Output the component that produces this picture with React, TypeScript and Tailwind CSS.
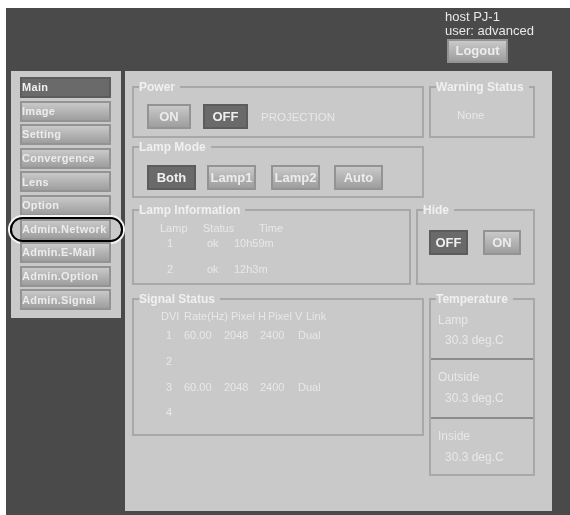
import React from "react";

const menuItems = ["Main", "Image", "Setting", "Convergence", "Lens", "Option", "Admin.Network", "Admin.E-Mail", "Admin.Option", "Admin.Signal"];

const signalRows = [
    { dvi: "1", rate: "60.00", h: "2048", v: "2400", link: "Dual", rowClass: "h-[26px]" },
    { dvi: "2", rate: "", h: "", v: "", link: "", rowClass: "h-[26px]" },
    { dvi: "3", rate: "60.00", h: "2048", v: "2400", link: "Dual", rowClass: "h-[25px]" },
    { dvi: "4", rate: "", h: "", v: "", link: "", rowClass: "h-[23px]" },
];

const temps = [
    { label: "Lamp", cellClass: "h-[54px] pt-[5px] border-b-2 border-[#8c8c8c]", valueClass: "mt-[2px]" },
    { label: "Outside", cellClass: "h-[59px] pt-[8px] border-b-2 border-[#8c8c8c]", valueClass: "mt-[3px]" },
    { label: "Inside", cellClass: "h-[57px] pt-[8px]", valueClass: "mt-[3px]" },
];

function Button({ label, active, className }: { label: string; active?: boolean; className: string }) {
    return (
        <button
            className={
                "flex items-center justify-center border-2 text-[13px] font-bold " +
                (active
                    ? "border-[#5c5c5c] bg-[#6a6a6a] text-[#f0f0f0] "
                    : "border-[#939393] bg-gradient-to-b from-[#c9c9c9] to-[#9e9e9e] text-[#ececec] ") +
                className
            }
        >
            {label}
        </button>
    );
}

function Group({ title, className, children }: { title: string; className: string; children?: React.ReactNode }) {
    return (
        <fieldset className={"shrink-0 border-2 border-[#a8a8a8] " + className}>
            <legend className="ml-[5px] pr-[5px] text-[12px] leading-[14px] font-bold text-[#f0f0f0]">{title}</legend>
            {children}
        </fieldset>
    );
}

export default function App() {
    return (
        <div className="flex h-[515px] w-[570px] overflow-hidden bg-white pt-[8px] pl-[6px] font-['Liberation_Sans',sans-serif] blur-[0.5px]">
            <div className="flex w-[564px] flex-col bg-[#4a4a4a]">
                {/* Header */}
                <header className="flex h-[63px] shrink-0 justify-end">
                    <div className="w-[125px] pt-[2px] text-[13px] leading-[14px] text-[#e8e8e8]">
                        <div>host PJ-1</div>
                        <div>user: advanced</div>
                        <Button label="Logout" className="mt-[1px] ml-[2px] h-[24px] w-[61px]" />
                    </div>
                </header>

                <div className="flex items-start">
                    {/* Side menu */}
                    <nav className="ml-[5px] flex h-[247px] w-[110px] shrink-0 flex-col gap-[2.6px] bg-[#c9c9c9] px-[9px] pt-[6px]">
                        {menuItems.map((item) => (
                            <div key={item} className="relative flex">
                                <button
                                    className={
                                        "h-[21px] w-[91px] border-2 text-left text-[11px] font-bold tracking-[0.3px] whitespace-nowrap " +
                                        (item === "Main"
                                            ? "border-[#5c5c5c] bg-[#6a6a6a] text-[#f0f0f0]"
                                            : "border-[#939393] bg-gradient-to-b from-[#c9c9c9] to-[#9e9e9e] text-[#ececec]")
                                    }
                                >
                                    {item}
                                </button>
                                {item === "Admin.Network" && (
                                    <div className="absolute top-[-2px] left-[-10px] h-[25px] w-[113px] rounded-full border-2 border-black shadow-[0_0_0_2px_#f4f4f4]" />
                                )}
                            </div>
                        ))}
                    </nav>

                    {/* Main panel */}
                    <main className="ml-[4px] flex h-[440px] w-[427px] shrink-0 flex-col bg-[#c9c9c9] pt-[9px] pl-[7px] text-[11px] leading-[14px] text-[#e8e8e8]">
                        <div className="flex gap-[5px]">
                            <Group title="Power" className="h-[58px] w-[292px]">
                                <div className="flex items-center pt-[10px] pl-[13px]">
                                    <Button label="ON" className="h-[25px] w-[44px]" />
                                    <Button label="OFF" active className="ml-[12px] h-[25px] w-[45px]" />
                                    <span className="ml-[13px] text-[11.5px]">PROJECTION</span>
                                </div>
                            </Group>
                            <Group title="Warning Status" className="h-[58px] w-[106px]">
                                <div className="pt-[14px] pl-[26px] text-[11.5px]">None</div>
                            </Group>
                        </div>

                        <Group title="Lamp Mode" className="mt-[2px] h-[58px] w-[292px]">
                            <div className="flex items-center gap-[11px] pt-[11px] pl-[13px]">
                                <Button label="Both" active className="h-[25px] w-[49px]" />
                                <Button label="Lamp1" className="h-[25px] w-[49px]" />
                                <Button label="Lamp2" className="ml-[4px] h-[25px] w-[49px]" />
                                <Button label="Auto" className="ml-[3px] h-[25px] w-[49px]" />
                            </div>
                        </Group>

                        <div className="mt-[5px] flex gap-[5px]">
                            <Group title="Lamp Information" className="h-[82px] w-[279px]">
                                <div className="grid grid-cols-[43px_56px_auto] pt-[4px] pl-[26px]">
                                    <span>Lamp</span>
                                    <span>Status</span>
                                    <span>Time</span>
                                </div>
                                <div className="mt-[1px] grid grid-cols-[40px_27px_auto] pl-[33px]">
                                    <span>1</span>
                                    <span>ok</span>
                                    <span>10h59m</span>
                                </div>
                                <div className="mt-[12px] grid grid-cols-[40px_27px_auto] pl-[33px]">
                                    <span>2</span>
                                    <span>ok</span>
                                    <span>12h3m</span>
                                </div>
                            </Group>
                            <Group title="Hide" className="h-[82px] w-[119px]">
                                <div className="flex gap-[15px] pt-[13px] pl-[11px]">
                                    <Button label="OFF" active className="h-[25px] w-[39px]" />
                                    <Button label="ON" className="h-[25px] w-[38px]" />
                                </div>
                            </Group>
                        </div>

                        <div className="mt-[7px] flex items-start gap-[5px]">
                            <Group title="Signal Status" className="h-[144px] w-[292px]">
                                <div className="grid grid-cols-[23px_47px_37px_38px_auto] pt-[3px] pb-[5px] pl-[27px]">
                                    <span>DVI</span>
                                    <span>Rate(Hz)</span>
                                    <span>Pixel H</span>
                                    <span>Pixel V</span>
                                    <span>Link</span>
                                </div>
                                {signalRows.map((row) => (
                                    <div key={row.dvi} className={"grid grid-cols-[18px_40px_36px_38px_auto] items-start pl-[32px] " + row.rowClass}>
                                        <span>{row.dvi}</span>
                                        <span>{row.rate}</span>
                                        <span>{row.h}</span>
                                        <span>{row.v}</span>
                                        <span>{row.link}</span>
                                    </div>
                                ))}
                            </Group>
                            <Group title="Temperature" className="h-[184px] w-[106px]">
                                {temps.map((t) => (
                                    <div key={t.label} className={"pl-[7px] text-[12px] leading-[18px] " + t.cellClass}>
                                        <div>{t.label}</div>
                                        <div className={"pl-[7px] " + t.valueClass}>30.3 deg.C</div>
                                    </div>
                                ))}
                            </Group>
                        </div>
                    </main>
                </div>
            </div>
        </div>
    );
}
